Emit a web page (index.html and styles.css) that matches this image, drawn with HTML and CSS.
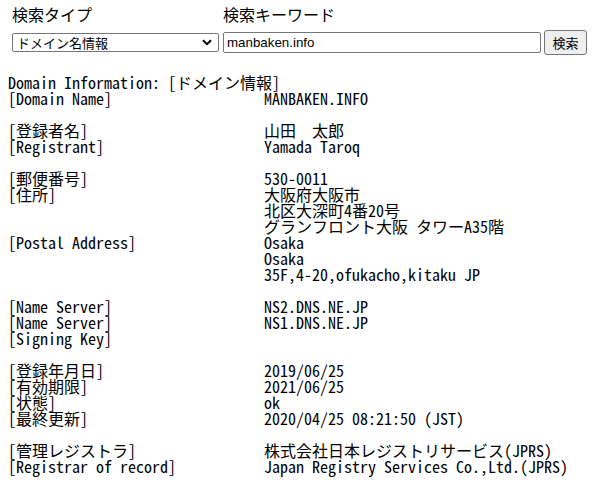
FILE: index.html
```html
<!DOCTYPE html>
<html lang="ja">
<head>
<meta charset="utf-8">
<title>Whois</title>
<link rel="stylesheet" href="styles.css">
</head>
<body>
<form class="search">
  <div class="label label-type">検索タイプ</div>
  <div class="label label-key">検索キーワード</div>
  <div class="empty"></div>
  <div class="select">
    <span class="select-text">ドメイン名情報</span>
    <svg class="chev" width="10" height="7" viewBox="0 0 10 7"><path d="M1 1.2 L5 5.2 L9 1.2" fill="none" stroke="#000" stroke-width="2"/></svg>
  </div>
  <div class="input">manbaken.info</div>
  <div class="button">検索</div>
</form>
<pre class="whois">Domain Information: [ドメイン情報]
[Domain Name]                   MANBAKEN.INFO

[登録者名]                      山田　太郎
[Registrant]                    Yamada Taroq

[郵便番号]                      530-0011
[住所]                          大阪府大阪市
                                北区大深町4番20号
                                グランフロント大阪 タワーA35階
[Postal Address]                Osaka
                                Osaka
                                35F,4-20,ofukacho,kitaku JP

[Name Server]                   NS2.DNS.NE.JP
[Name Server]                   NS1.DNS.NE.JP
[Signing Key]                   

[登録年月日]                    2019/06/25
[有効期限]                      2021/06/25
[状態]                          ok
[最終更新]                      2020/04/25 08:21:50 (JST)

[管理レジストラ]                株式会社日本レジストリサービス(JPRS)
[Registrar of record]           Japan Registry Services Co.,Ltd.(JPRS)
</pre>
</body>
</html>
```

FILE: styles.css
```css
html, body {
  margin: 0;
  padding: 0;
  background: #fff;
  color: #000;
}
body {
  padding: 0 8px 8px 12px;
}
.search {
  display: grid;
  grid-template-columns: 211px 321px auto;
  grid-template-rows: 29px 27px;
  align-items: center;
  font-family: "Noto Sans CJK JP", "Noto Sans", sans-serif;
}
.label {
  font-size: 16px;
  line-height: 20px;
  align-self: start;
  padding-top: 4px;
}
.select {
  box-sizing: border-box;
  width: 207px;
  height: 19px;
  border: 1px solid #767676;
  border-radius: 2px;
  display: flex;
  align-items: center;
  justify-content: space-between;
  padding: 0 6px 0 4px;
  font-size: 13px;
  line-height: 17px;
}
.chev { display: block; }
.input {
  box-sizing: border-box;
  width: 318px;
  height: 21px;
  border: 1px solid #767676;
  border-radius: 2px;
  padding: 0 3px;
  font-family: "Liberation Sans", Arial, sans-serif;
  font-size: 13.33px;
  line-height: 19px;
}
.button {
  box-sizing: border-box;
  width: 43px;
  height: 25px;
  border: 1px solid #767676;
  border-radius: 3px;
  background: #efefef;
  font-size: 13px;
  line-height: 23px;
  text-align: center;
  margin-top: -1px;
}
.whois {
  margin: 18px 0 0 -4px;
  font-family: "Noto Sans Mono CJK JP", "Liberation Mono", monospace;
  font-size: 16px;
  line-height: 16px;
  white-space: pre;
}
```
